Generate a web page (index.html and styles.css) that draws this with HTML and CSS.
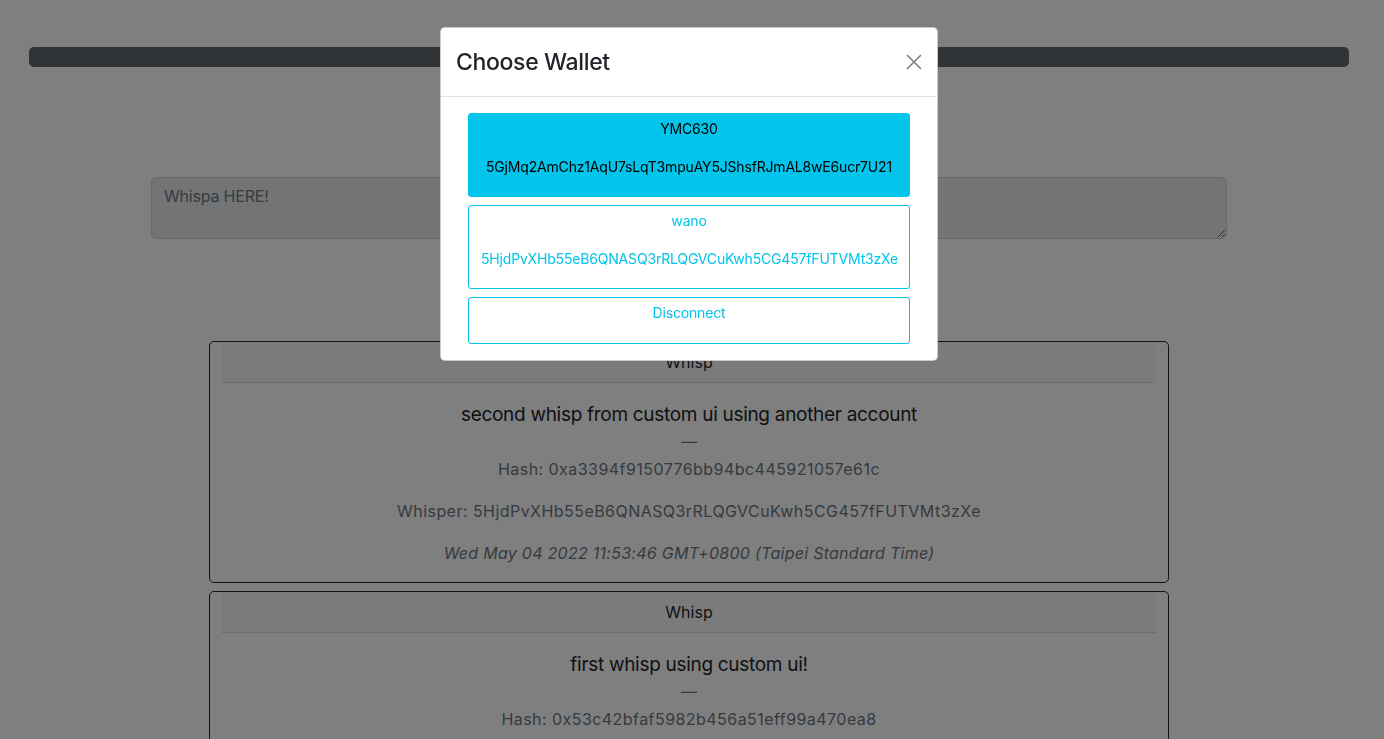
FILE: index.html
```html
<!DOCTYPE html>
<html lang="en">
<head>
<meta charset="utf-8">
<title>Whisp</title>
<link rel="stylesheet" href="styles.css">
</head>
<body>
<div class="page">
  <div class="container">
    <div class="topbar"></div>
    <div class="compose">
      <textarea class="whisp-input" placeholder="Whispa HERE!" disabled></textarea>
    </div>
    <div class="feed">
      <div class="card">
        <div class="card-header">Whisp</div>
        <div class="card-body">
          <h5 class="card-title">second whisp from custom ui using another account</h5>
          <div class="dash">—</div>
          <p class="meta">Hash: 0xa3394f9150776bb94bc445921057e61c</p>
          <p class="meta">Whisper: 5HjdPvXHb55eB6QNASQ3rRLQGVCuKwh5CG457fFUTVMt3zXe</p>
          <p class="meta date">Wed May 04 2022 11:53:46 GMT+0800 (Taipei Standard Time)</p>
        </div>
      </div>
      <div class="card">
        <div class="card-header">Whisp</div>
        <div class="card-body">
          <h5 class="card-title">first whisp using custom ui!</h5>
          <div class="dash">—</div>
          <p class="meta">Hash: 0x53c42bfaf5982b456a51eff99a470ea8</p>
        </div>
      </div>
    </div>
  </div>
</div>

<div class="backdrop"></div>

<div class="modal">
  <div class="modal-dialog">
    <div class="modal-header">
      <h4 class="modal-title">Choose Wallet</h4>
      <button class="btn-close" type="button" aria-label="Close">
        <svg width="16" height="16" viewBox="0 0 16 16"><path d="M1 1 L15 15 M15 1 L1 15" stroke="currentColor" stroke-width="1.6" fill="none"/></svg>
      </button>
    </div>
    <div class="modal-body">
      <button class="wallet-btn active" type="button">
        <div class="wallet-name">YMC630</div>
        <div class="wallet-addr">5GjMq2AmChz1AqU7sLqT3mpuAY5JShsfRJmAL8wE6ucr7U21</div>
      </button>
      <button class="wallet-btn" type="button">
        <div class="wallet-name">wano</div>
        <div class="wallet-addr">5HjdPvXHb55eB6QNASQ3rRLQGVCuKwh5CG457fFUTVMt3zXe</div>
      </button>
      <button class="wallet-btn" type="button">
        <div class="wallet-name">Disconnect</div>
      </button>
    </div>
  </div>
</div>
</body>
</html>
```

FILE: styles.css
```css
* { box-sizing: border-box; }
html, body { margin: 0; padding: 0; }
body {
  font-family: Inter, "Noto Sans", sans-serif;
  font-size: 16px;
  line-height: 24px;
  color: #212529;
  background: #fff;
  overflow: hidden;
  height: 739px;
  padding-right: 6px;
}
.container {
  width: 1320px;
  margin: 0 auto;
  padding-top: 47px;
}
.topbar {
  height: 20px;
  background: #63686f;
  border-radius: 5px;
}
.compose {
  margin-top: 110px;
  display: flex;
  justify-content: center;
}
.whisp-input {
  width: 1076px;
  height: 62px;
  padding: 6px 12px;
  font-family: inherit;
  font-size: 16px;
  line-height: 24px;
  letter-spacing: -0.2px;
  color: #212529;
  background: #e6e9ec;
  border: 1px solid #ced4da;
  border-radius: 5px;
  resize: vertical;
  display: block;
}
.whisp-input::placeholder { color: #6c757d; opacity: 1; }
.feed {
  margin-top: 102px;
  display: flex;
  flex-direction: column;
  align-items: center;
  gap: 8px;
}
.card {
  width: 960px;
  border: 1px solid #212529;
  border-radius: 5px;
  text-align: center;
}
.card-header {
  margin: 0 12px;
  padding: 8px 16px;
  background: rgba(0,0,0,0.03);
  border-bottom: 1px solid rgba(0,0,0,0.125);
}
.card-body { padding: 20px 16px 17px; }
.card-title {
  margin: 0 0 2px;
  font-size: 19px;
  font-weight: 400;
  line-height: 24px;
  letter-spacing: -0.3px;
}
.dash { color: #6c757d; margin-bottom: 4px; }
.meta { margin: 0 0 18px; color: #6c757d; letter-spacing: 0.45px; }
.meta:last-child { margin-bottom: 0; }
.date { font-style: italic; letter-spacing: 0.27px; }

.backdrop {
  position: fixed;
  inset: 0;
  background: rgba(0,0,0,0.5);
}
.modal {
  position: fixed;
  inset: 0;
  padding-right: 6px;
  display: flex;
  justify-content: center;
  align-items: flex-start;
}
.modal-dialog {
  width: 498px;
  margin-top: 27px;
  background: #fff;
  border: 1px solid rgba(0,0,0,0.2);
  border-radius: 5px;
}
.modal-header {
  display: flex;
  align-items: center;
  justify-content: space-between;
  padding: 20px 15px;
  border-bottom: 1px solid #dee2e6;
}
.modal-title {
  margin: 0;
  font-size: 23px;
  font-weight: 500;
  line-height: 28px;
  letter-spacing: -0.35px;
}
.btn-close {
  width: 16px;
  height: 16px;
  padding: 0;
  border: 0;
  background: transparent;
  color: #000;
  opacity: 0.5;
  display: flex;
}
.modal-body {
  padding: 16px 27px;
  display: flex;
  flex-direction: column;
  gap: 8px;
}
.wallet-btn {
  display: block;
  width: 100%;
  padding: 5px 12px 20px;
  font-family: inherit;
  font-size: 14px;
  line-height: 19.5px;
  letter-spacing: -0.18px;
  color: #03c4ea;
  background: #fff;
  border: 1px solid #03c4ea;
  border-radius: 3px;
  text-align: center;
}
.wallet-btn.active { background: #03c4ea; color: #000; }
.wallet-addr { margin-top: 18px; }
```
